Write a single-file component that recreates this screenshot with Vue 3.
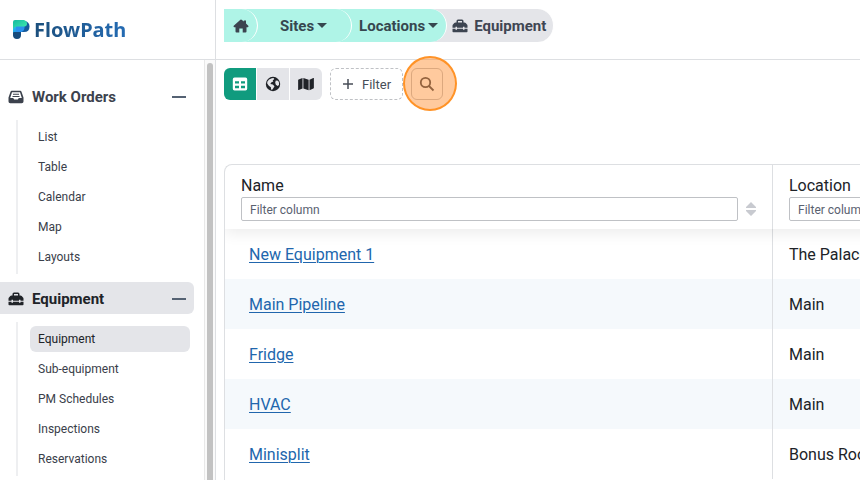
<script setup>
const groups = [
  { name: 'Work Orders', icon: 'inbox', active: false, items: ['List', 'Table', 'Calendar', 'Map', 'Layouts'] },
  { name: 'Equipment', icon: 'toolbox', active: true, items: ['Equipment', 'Sub-equipment', 'PM Schedules', 'Inspections', 'Reservations'] },
]
const rows = [
  { name: 'New Equipment 1', location: 'The Palace' },
  { name: 'Main Pipeline', location: 'Main' },
  { name: 'Fridge', location: 'Main' },
  { name: 'HVAC', location: 'Main' },
  { name: 'Minisplit', location: 'Bonus Room' },
]
const columns = ['Name', 'Location']
</script>

<template>
  <div class="app">
    <svg class="defs" aria-hidden="true">
      <symbol id="i-toolbox" viewBox="0 0 16 14">
        <path fill-rule="evenodd" d="M4.500 3.500V2Q4.500 .5 6 .5H10Q11.500 .5 11.500 2V3.500H12.500Q13.200 3.500 13.700 4L15 5.500Q15.500 6 15.500 6.700V8.700H12.500V7.700H11V8.700H5V7.700H3.500V8.700H.5V6.700Q.5 6 1 5.500L2.300 4Q2.800 3.500 3.500 3.500ZM6 3.500H10V2H6Z" />
        <path d="M.5 9.700H3.500V10.700H5V9.700H11V10.700H12.500V9.700H15.500V12.500Q15.500 13.300 14.700 13.300H1.300Q.5 13.300 .5 12.500Z" />
      </symbol>
      <symbol id="i-inbox" viewBox="0 0 16 14">
        <path fill-rule="evenodd" d="M3.800 .8H12.200Q13.200 .8 13.500 1.700L15.500 7.500V11.500Q15.500 13.300 13.700 13.300H2.300Q.5 13.300 .5 11.500V7.500L2.500 1.700Q2.800 .8 3.800 .8ZM4 2.300 2.200 8H5.200L6.200 9.500H9.800L10.800 8H13.800L12 2.300ZM5 3.700H11V4.800H5ZM4.500 5.900H11.500V7H4.500Z" />
      </symbol>
      <symbol id="i-home" viewBox="0 0 16 14">
        <path d="M7.400 .7Q8 .3 8.600 .7L10.800 2.600V1.500H13V4.600L15.300 6.800Q15.900 8.200 14.800 8.200H13.500V12.500Q13.500 13.500 12.500 13.500H9.700V9.500H6.300V13.500H3.500Q2.500 13.500 2.500 12.500V8.200H1.200Q.1 8.200 .7 6.800Z" />
      </symbol>
    </svg>

    <aside class="sidebar">
      <a class="brand" href="#">
        <svg class="mark" viewBox="0 0 17 19" aria-hidden="true">
          <defs>
            <linearGradient id="g-green" x1="0" y1="0" x2="1" y2="1"><stop offset="0" stop-color="#14b8a0" /><stop offset="1" stop-color="#43efaf" /></linearGradient>
            <linearGradient id="g-blue" x1="0" y1="0" x2="1" y2="1"><stop offset="0" stop-color="#28c8ef" /><stop offset="1" stop-color="#1d67dc" /></linearGradient>
          </defs>
          <path d="M8 1H12Q16.500 2 16.500 6.500 16.500 12 11 12H7Z" fill="#155a9c" />
          <path d="M0 5H5L11 9 7 13 0 16Z" fill="url(#g-blue)" />
          <path d="M3 6H11.500V8Q11 12 7 12H3Z" fill="#2a91ed" />
          <path d="M0 13Q0 11.500 2 12H8V15Q8 19 4 19 0 19 0 15Z" fill="#164b7c" />
          <path d="M2 0H11Q14.500 1 14 4.500 13.500 6.500 11.500 6.500H4Q1 6.500 0 9V2Q0 0 2 0Z" fill="url(#g-green)" />
        </svg>
        <span>FlowPath</span>
      </a>
      <div class="side-body">
        <nav class="nav" aria-label="Main navigation">
          <section v-for="g in groups" :key="g.name" class="group">
            <button class="group-head" :class="{ active: g.active }" type="button" aria-expanded="true">
              <svg class="icon" aria-hidden="true"><use :href="'#i-' + g.icon" /></svg>
              <span>{{ g.name }}</span>
              <i class="minus"></i>
            </button>
            <ul class="items">
              <li v-for="item in g.items" :key="item">
                <a href="#" class="item" :class="{ current: item === g.name }">{{ item }}</a>
              </li>
            </ul>
          </section>
        </nav>
        <div class="scroll"><div class="thumb"></div></div>
      </div>
    </aside>

    <main class="main">
      <header class="top">
        <nav class="crumbs" aria-label="Breadcrumb">
          <a class="crumb home" href="#" aria-label="Home"><svg class="icon" aria-hidden="true"><use href="#i-home" /></svg></a>
          <button class="crumb sites" type="button">Sites<i class="caret"></i></button>
          <button class="crumb locations" type="button">Locations<i class="caret"></i></button>
          <a class="crumb last" href="#"><svg class="icon" aria-hidden="true"><use href="#i-toolbox" /></svg>Equipment</a>
        </nav>
      </header>

      <div class="tools">
        <div class="views">
          <button class="view on" type="button" aria-label="Table view">
            <svg viewBox="0 0 16 14" width="16" height="14"><path fill-rule="evenodd" d="M2.500 .5H13.500Q15.200 .5 15.200 2.200V11.800Q15.200 13.500 13.500 13.500H2.500Q.8 13.500 .8 11.800V2.200Q.8 .5 2.500 .5ZM3 4.300V6.600H7V4.300ZM9 4.300V6.600H13V4.300ZM3 8.800V11.200H7V8.800ZM9 8.800V11.200H13V8.800Z" /></svg>
          </button>
          <button class="view" type="button" aria-label="Globe view">
            <svg viewBox="0 0 16 16" width="16" height="16"><circle cx="8" cy="8" r="7.200" /><path class="land" d="M6.800 2.200 8.500 1.900 9.300 3 7.700 4.400 8.300 5.400 6.500 6.300 5.300 8 7.800 8.600 9.500 10.300 8.300 12.300 7 14 6 13.300 5.900 11.300 3.800 9.700 2.200 7.500 2.300 5.800 4 3.500ZM10.800 4.600 13.100 4.700 14 6.500 14 9 12.500 9.900 10.700 8.500 10.200 6.500Z" /></svg>
          </button>
          <button class="view" type="button" aria-label="Map view">
            <svg viewBox="0 0 576 512" width="16" height="14"><path d="M0 117.660v346.320c0 11.320 11.430 19.060 21.940 14.860L160 416V32L20.120 87.950A32 32 0 0 0 0 117.660zM192 416l192 64V96L192 32v384zM554.060 33.160L416 96v384l139.880-55.950A32 32 0 0 0 576 394.340V48.020c0-11.320-11.430-19.060-21.940-14.860z" /></svg>
          </button>
        </div>
        <button class="filter" type="button">
          <svg viewBox="0 0 12 12" width="12" height="12" aria-hidden="true"><path d="M6 1V11M1 6H11" /></svg>
          Filter
        </button>
        <div class="search-wrap">
          <button class="search" type="button" aria-label="Search">
            <svg viewBox="0 0 16 16" width="16" height="16"><circle cx="6.500" cy="6.500" r="4.700" /><path d="M10 10 14.500 14.500" /></svg>
          </button>
          <span class="halo"></span>
        </div>
      </div>

      <div class="table-frame">
        <table>
          <thead>
            <tr>
              <th v-for="c in columns" :key="c" scope="col">
                <label :for="'filter-' + c">{{ c }}</label>
                <div class="field">
                  <input :id="'filter-' + c" type="text" placeholder="Filter column" />
                  <svg class="sort" viewBox="0 0 10 14" aria-hidden="true"><path d="M5 0 10 5V6H0V5ZM0 8H10V9L5 14 0 9Z" /></svg>
                </div>
              </th>
            </tr>
          </thead>
          <tbody>
            <tr v-for="r in rows" :key="r.name">
              <td><a href="#">{{ r.name }}</a></td>
              <td>{{ r.location }}</td>
            </tr>
          </tbody>
        </table>
      </div>
    </main>
  </div>
</template>

<style>
body { margin: 0; overflow: hidden; }
</style>

<style scoped>
* { box-sizing: border-box; }
.app { display: flex; height: 100vh; overflow: hidden; background: #fff; color: #202328; font-family: Roboto, "Liberation Sans", sans-serif; font-size: 16px; }
button, input { font: inherit; margin: 0; padding: 0; color: inherit; }
button { border: 0; background: none; }
a { color: inherit; text-decoration: none; }
svg { flex: none; fill: currentColor; }
.defs { position: absolute; width: 0; height: 0; }
.icon { width: 16px; height: 14px; }

.sidebar { flex: 0 0 216px; display: flex; flex-direction: column; border-right: 1px solid #dddfe2; }
.brand { flex: none; display: flex; align-items: center; gap: 4px; height: 60px; padding-left: 13px; border-bottom: 1px solid #dddfe2; }
.mark { width: 17px; height: 19px; }
.brand span { font-family: "Noto Sans", sans-serif; font-size: 20px; font-weight: 700; background: linear-gradient(90deg, #1c4f7c, #246bb3); background-clip: text; color: transparent; }
.side-body { flex: 1; min-height: 0; display: flex; overflow: hidden; }
.nav { flex: 1; padding: 20px 10px 0 0; }
.group { display: flex; flex-direction: column; gap: 8px; margin-bottom: 8px; }
.group-head { display: flex; align-items: center; gap: 8px; height: 32px; padding: 1px 8px 0; border-radius: 0 6px 6px 0; color: #3c424d; font-size: 15px; font-weight: 700; text-align: left; }
.group-head span { flex: 1; }
.group-head.active { background: #e4e5e9; color: #202328; }
.minus { width: 14px; height: 2px; background: #556273; }
.items { display: flex; flex-direction: column; gap: 4px; list-style: none; margin: 0 4px 0 16px; padding: 4px 0 4px 12px; border-left: 2px solid #eeeff1; }
.item { display: flex; align-items: center; height: 26px; padding: 0 8px; border-radius: 6px; color: #3a404a; font-size: 12px; }
.item.current { background: #e4e5e9; color: #202328; }
.scroll { flex: 0 0 11px; padding: 3px 2px 0; border-left: 1px solid #e8e8e8; background: #fafafa; }
.thumb { height: 100%; border-radius: 4px 4px 0 0; background: #c2c2c2; }

.main { flex: 1; min-width: 0; display: flex; flex-direction: column; }
.top { flex: none; height: 60px; padding: 9px 8px 0; border-bottom: 1px solid #dddfe2; }
.crumbs { display: flex; }
.crumb { display: flex; align-items: center; height: 33px; color: #36474f; font-size: 15px; font-weight: 700; white-space: nowrap; background: #aff4e7; border-right: 1px solid #fff; border-radius: 0 17px 17px 0; position: relative; }
.crumb + .crumb { margin-left: -20px; }
.crumb .icon { color: #3c4450; }
.home { z-index: 4; padding: 0 8px 0 9px; }
.sites { z-index: 3; padding: 0 24px 0 42px; }
.locations { z-index: 2; padding: 0 8px 0 27px; }
.last { z-index: 1; gap: 6px; padding: 0 7px 0 25px; background: #e4e5e9; color: #3f4653; }
.caret { margin-left: 3px; border: 5px solid transparent; border-top-color: currentColor; border-bottom: 0; }

.tools { flex: none; display: flex; gap: 8px; padding: 8px; }
.views { display: flex; gap: 1px; border-radius: 6px; overflow: hidden; }
.view { display: grid; place-items: center; width: 32px; height: 32px; background: #e4e5e9; color: #202328; }
.view.on { background: #109b7e; color: #fff; }
.land { fill: #e4e5e9; }
.filter { display: flex; align-items: center; gap: 8px; height: 32px; padding: 0 11px; border: 1px dashed #bfc1c5; border-radius: 6px; color: #484e58; font-size: 13px; }
.filter svg { fill: none; stroke: currentColor; stroke-width: 1.500; }
.search-wrap { position: relative; }
.search { display: grid; place-items: center; width: 32px; height: 32px; border: 1px solid #bfc1c5; border-radius: 6px; }
.search svg { fill: none; stroke: #3b4350; stroke-width: 1.800; }
.halo { position: absolute; inset: -12px -14px -11px -8px; border: 2px solid #ff9327; border-radius: 50%; background: rgba(255, 138, 41, 0.450); pointer-events: none; }

.table-frame { flex: 1; min-height: 0; margin: 56px 0 0 8px; overflow: hidden; border: 1px solid #dddfe2; border-width: 1px 0 0 1px; border-radius: 8px 0 0 0; }
table { width: 170%; min-width: 1080px; table-layout: fixed; border-collapse: separate; border-spacing: 0; }
thead { position: relative; box-shadow: 0 4px 14px rgba(0, 0, 0, 0.080); }
th { height: 64px; padding: 10px 16px 8px; text-align: left; font-weight: 400; vertical-align: top; }
th, td { border-right: 1px solid #dddfe2; }
th:first-child { width: 548px; }
label { display: block; height: 22px; line-height: 21px; }
.field { display: flex; align-items: center; gap: 8px; }
.field input { flex: 1; min-width: 0; height: 24px; padding: 1px 8px 0; border: 1px solid #bfc1c5; border-radius: 2px; font-size: 12px; outline: 0; background: #fff; }
.field input::placeholder { color: #596170; opacity: 1; }
.sort { width: 10px; height: 14px; color: #c8cad0; }
td { height: 50px; padding: 0 16px; }
td:first-child { padding-left: 24px; }
td a { color: #2166ad; text-decoration: underline; text-decoration-thickness: 1px; text-underline-offset: 2px; }
tbody tr:nth-child(even) { background: #f5f9fc; }
</style>
